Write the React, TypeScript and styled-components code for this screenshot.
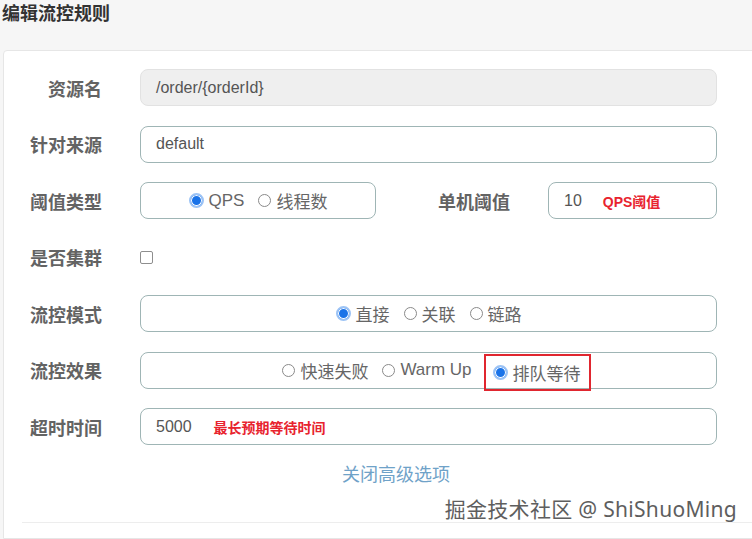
import React from 'react'
import styled, { createGlobalStyle, css } from 'styled-components'

const GlobalStyle = createGlobalStyle`
  html, body {
    margin: 0;
    padding: 0;
    background: #f6f6f6;
    overflow: hidden;
  }
  body {
    font-family: "Liberation Sans", "Noto Sans CJK SC", sans-serif;
  }
`

const Page = styled.div`
  position: relative;
  width: 752px;
  height: 539px;
  overflow: hidden;
`

const Header = styled.div`
  height: 50px;
  padding: 4px 0 0 2px;
  box-sizing: border-box;
  font-size: 18px;
  line-height: 20px;
  font-weight: bold;
  color: #333;
`

const Card = styled.div`
  margin-left: 3px;
  width: 786px;
  height: 489px;
  box-sizing: border-box;
  background: #fff;
  border: 1px solid #e6e6e6;
  border-radius: 4px 0 0 0;
  padding-top: 18px;
`

const Form = styled.div`
  display: flex;
  flex-direction: column;
  gap: 19.5px;
`

const Row = styled.div`
  display: grid;
  grid-template-columns: 98px 577px;
  column-gap: 38px;
  align-items: center;
  height: 37px;
`

const Label = styled.div`
  text-align: right;
  font-size: 18px;
  font-weight: bold;
  color: #636363;
  white-space: nowrap;
`

const boxBase = css`
  height: 37px;
  box-sizing: border-box;
  border: 1px solid #9fb5b5;
  border-radius: 8px;
  background: #fff;
`

const TextBox = styled.div<{ disabled?: boolean }>`
  ${boxBase}
  display: flex;
  align-items: center;
  padding-left: 15px;
  font-size: 16px;
  color: #555;
  ${({ disabled }) =>
    disabled &&
    css`
      background: #efefef;
      border-color: #e2e2e2;
    `}
`

const Hint = styled.span<{ gap: number }>`
  margin-left: ${({ gap }) => gap}px;
  font-size: 14px;
  font-weight: bold;
  color: #e8232e;
`

const RadioBox = styled.div<{ width?: number; shift?: number }>`
  ${boxBase}
  width: ${({ width }) => (width ? `${width}px` : 'auto')};
  display: flex;
  align-items: center;
  justify-content: center;
  gap: 14px;
  padding-left: ${({ shift }) => shift || 0}px;
`

const RadioItem = styled.label<{ marked?: boolean }>`
  display: flex;
  align-items: center;
  gap: 5px;
  font-size: 17px;
  color: #666;
  white-space: nowrap;
  ${({ marked }) =>
    marked &&
    css`
      outline: 2px solid #e0262f;
      padding: 4px 8px 4px 7px;
      margin-top: 4px;
    `}
`

const Dot = styled.span<{ checked?: boolean }>`
  width: 13px;
  height: 13px;
  border-radius: 50%;
  box-sizing: border-box;
  flex-shrink: 0;
  ${({ checked }) =>
    checked
      ? css`
          width: 15px;
          height: 15px;
          background: #1a73e8;
          border: 2px solid #9cc3f5;
          box-shadow: inset 0 0 0 1px #fff;
        `
      : css`
          border: 1px solid #8a8a8a;
          background: #fff;
        `}
`

const Split = styled.div`
  display: flex;
  align-items: center;
`

const SideLabel = styled(Label)`
  margin-left: 62px;
`

const SideInput = styled(TextBox)`
  margin-left: 38px;
  flex: 1;
`

const Checkbox = styled.span`
  width: 13px;
  height: 13px;
  box-sizing: border-box;
  border: 1px solid #8e8e8e;
  border-radius: 2px;
  background: #fff;
`

const ToggleLink = styled.div`
  margin-top: 18px;
  text-align: center;
  font-size: 18px;
  line-height: 24px;
  color: #6fa2c8;
`

const Divider = styled.div`
  margin: 35px 18px 0;
  border-top: 1px solid #ededed;
`

const Watermark = styled.div`
  position: absolute;
  right: 15px;
  bottom: 16px;
  font-size: 21px;
  letter-spacing: 0.3px;
  color: #5e5e5e;
  text-shadow: 0 0 2px #fff, 0 0 2px #fff;
  font-family: "Noto Sans", "Noto Sans CJK SC", sans-serif;
`

type Option = { label: string; checked?: boolean; marked?: boolean }

function Radios({ options, width, shift }: { options: Option[]; width?: number; shift?: number }) {
  return (
    <RadioBox width={width} shift={shift}>
      {options.map((o) => (
        <RadioItem key={o.label} marked={o.marked}>
          <Dot checked={o.checked} />
          {o.label}
        </RadioItem>
      ))}
    </RadioBox>
  )
}

export default function App() {
  return (
    <Page>
      <GlobalStyle />
      <Header>编辑流控规则</Header>
      <Card>
        <Form>
          <Row>
            <Label>资源名</Label>
            <TextBox disabled>/order/{'{orderId}'}</TextBox>
          </Row>
          <Row>
            <Label>针对来源</Label>
            <TextBox>default</TextBox>
          </Row>
          <Row>
            <Label>阈值类型</Label>
            <Split>
              <Radios width={236} options={[{ label: 'QPS', checked: true }, { label: '线程数' }]} />
              <SideLabel>单机阈值</SideLabel>
              <SideInput>
                10<Hint gap={21}>QPS阈值</Hint>
              </SideInput>
            </Split>
          </Row>
          <Row>
            <Label>是否集群</Label>
            <Checkbox />
          </Row>
          <Row>
            <Label>流控模式</Label>
            <Radios
              options={[{ label: '直接', checked: true }, { label: '关联' }, { label: '链路' }]}
            />
          </Row>
          <Row>
            <Label>流控效果</Label>
            <Radios
              shift={14}
              options={[
                { label: '快速失败' },
                { label: 'Warm Up' },
                { label: '排队等待', checked: true, marked: true },
              ]}
            />
          </Row>
          <Row>
            <Label>超时时间</Label>
            <TextBox>
              5000<Hint gap={22}>最长预期等待时间</Hint>
            </TextBox>
          </Row>
        </Form>
        <ToggleLink>关闭高级选项</ToggleLink>
        <Divider />
      </Card>
      <Watermark>掘金技术社区 @ ShiShuoMing</Watermark>
    </Page>
  )
}
